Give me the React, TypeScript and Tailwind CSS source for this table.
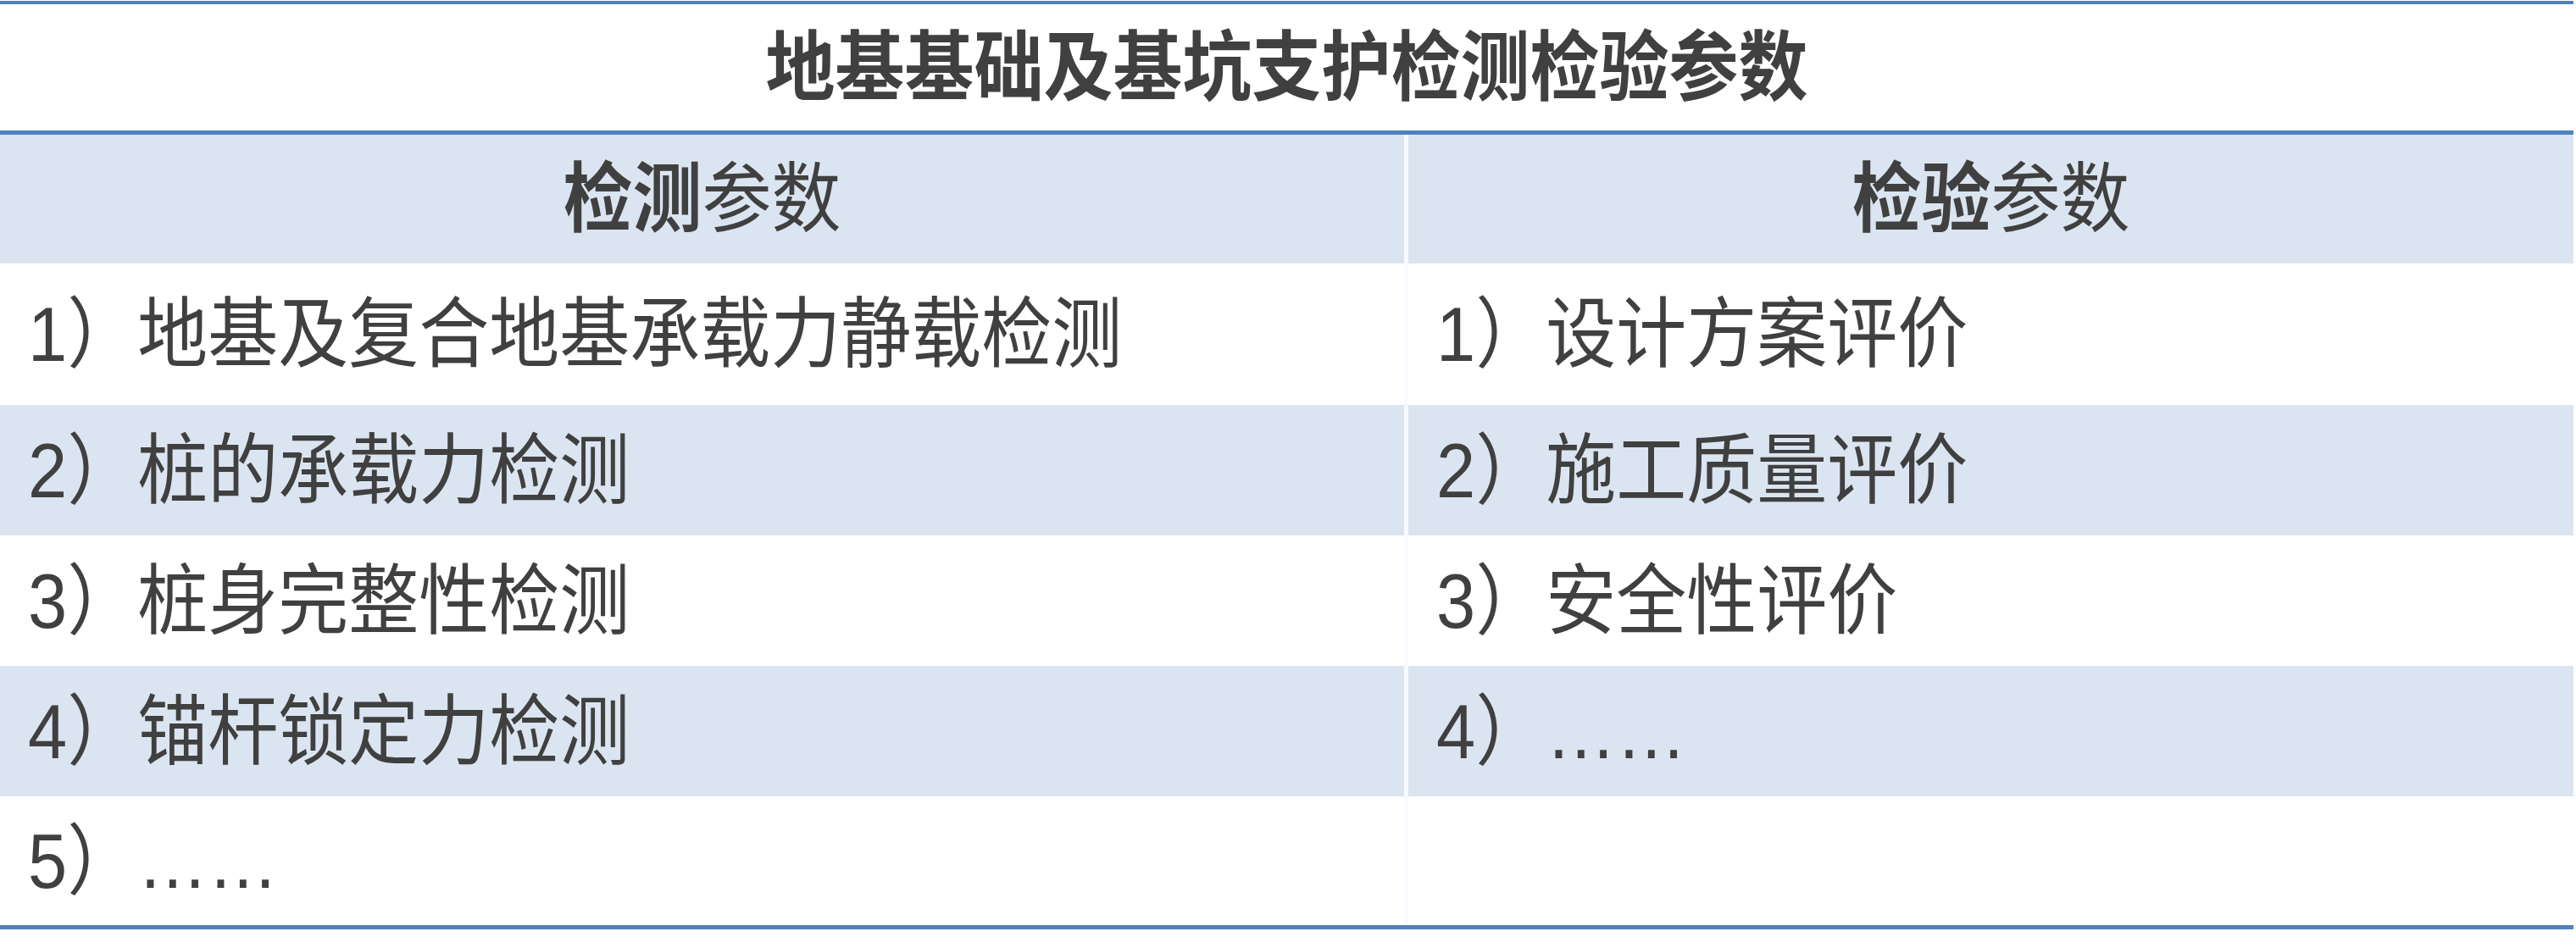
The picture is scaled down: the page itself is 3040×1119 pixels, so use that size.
import React from 'react';

const rows: { left: string; right: string; shaded: boolean; h: string }[] = [
  { left: '1）地基及复合地基承载力静载检测', right: '1）设计方案评价', shaded: false, h: 'h-[167px]' },
  { left: '2）桩的承载力检测', right: '2）施工质量评价', shaded: true, h: 'h-[154px]' },
  { left: '3）桩身完整性检测', right: '3）安全性评价', shaded: false, h: 'h-[154px]' },
  { left: '4）锚杆锁定力检测', right: '4）……', shaded: true, h: 'h-[154px]' },
  { left: '5）……', right: '', shaded: false, h: 'h-[152px]' },
];

const font = "font-['Liberation_Sans','Noto_Sans_CJK_SC',sans-serif]";

export default function App() {
  return (
    <div className={`w-[3040px] h-[1119px] bg-white pt-px text-[#404040] ${font}`}>
      <div className="w-[3037px] border-t-4 border-b-[5px] border-[#4f81bd]">
        <div className="h-[154px] flex items-center justify-center border-b-[5px] border-[#4f81bd]">
          <span className="inline-block scale-y-[1.1] text-[82px] font-bold leading-none">地基基础及基坑支护检测检验参数</span>
        </div>

        <div className="flex h-[152px] bg-[#dbe5f1]">
          <div className="w-[1657px] flex items-center justify-center text-[82px] leading-none">
            <span className="inline-block scale-y-[1.1]">
              <span className="font-bold">检测</span>
              <span>参数</span>
            </span>
          </div>
          <div className="flex-1 flex items-center justify-center text-[82px] leading-none border-l-[5px] border-[#f7faff]">
            <span className="inline-block scale-y-[1.1]">
              <span className="font-bold">检验</span>
              <span>参数</span>
            </span>
          </div>
        </div>

        {rows.map((r, i) => (
          <div key={i} className={`flex ${r.h} ${r.shaded ? 'bg-[#dbe5f1]' : 'bg-white'}`}>
            <div className="w-[1657px] flex items-center pl-[33px] text-[83px] leading-none whitespace-nowrap">
              <span className="inline-block scale-y-[1.1]">{r.left}</span>
            </div>
            <div className="flex-1 flex items-center pl-[33px] text-[83px] leading-none whitespace-nowrap border-l-[5px] border-[#f7faff]">
              <span className="inline-block scale-y-[1.1]">{r.right}</span>
            </div>
          </div>
        ))}
      </div>
    </div>
  );
}
